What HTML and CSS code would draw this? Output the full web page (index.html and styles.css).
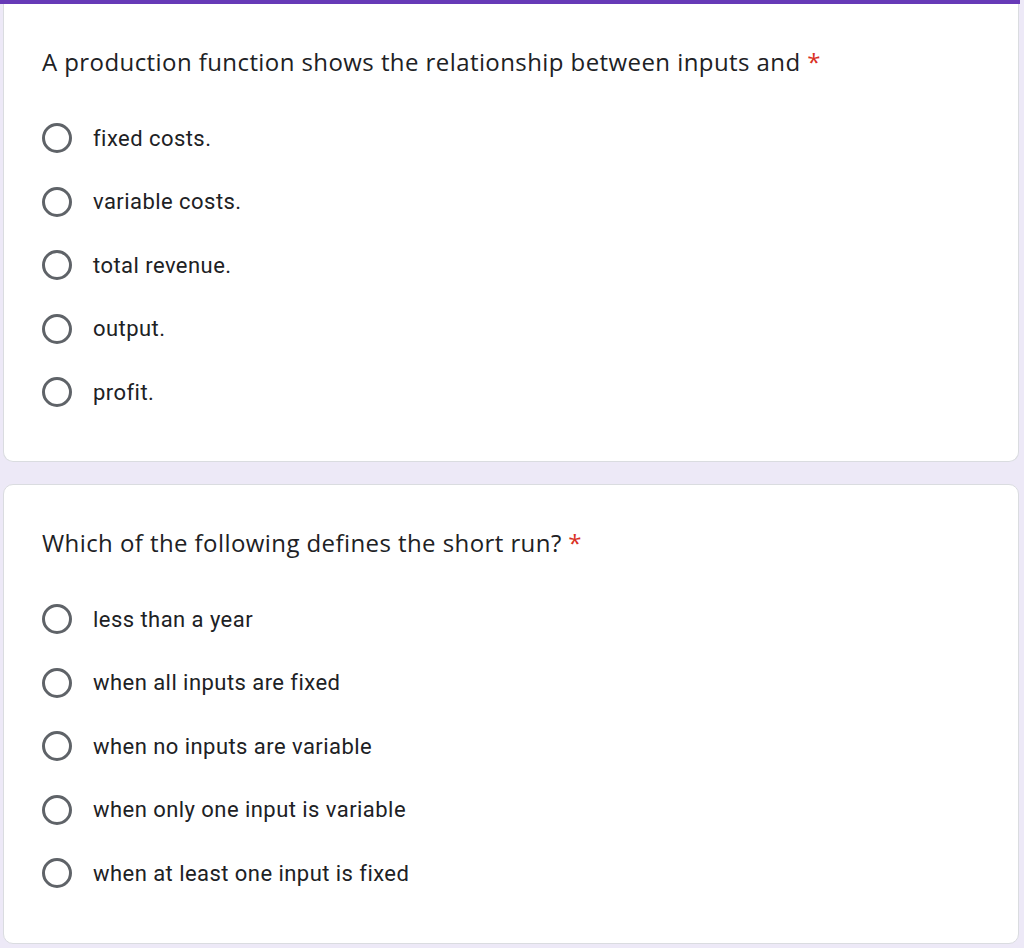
FILE: index.html
```html
<!DOCTYPE html>
<html>
<head>
<meta charset="utf-8">
<link rel="stylesheet" href="styles.css">
</head>
<body>
<div class="topbar"></div>
<div class="card card-first">
  <div class="question">A production function shows the relationship between inputs and <span class="req">*</span></div>
  <div class="options">
    <div class="option"><span class="radio"></span><span class="label">fixed costs.</span></div>
    <div class="option"><span class="radio"></span><span class="label">variable costs.</span></div>
    <div class="option"><span class="radio"></span><span class="label">total revenue.</span></div>
    <div class="option"><span class="radio"></span><span class="label">output.</span></div>
    <div class="option"><span class="radio"></span><span class="label">profit.</span></div>
  </div>
</div>
<div class="card">
  <div class="question">Which of the following defines the short run? <span class="req">*</span></div>
  <div class="options">
    <div class="option"><span class="radio"></span><span class="label">less than a year</span></div>
    <div class="option"><span class="radio"></span><span class="label">when all inputs are fixed</span></div>
    <div class="option"><span class="radio"></span><span class="label">when no inputs are variable</span></div>
    <div class="option"><span class="radio"></span><span class="label">when only one input is variable</span></div>
    <div class="option"><span class="radio"></span><span class="label">when at least one input is fixed</span></div>
  </div>
</div>
</body>
</html>
```
FILE: styles.css
```css
html, body {
  margin: 0;
  padding: 0;
}
body {
  background: #ede9f7;
  width: 1024px;
  height: 948px;
  overflow: hidden;
}
.topbar {
  width: 1020px;
  height: 4px;
  background: #673ab7;
}
.card {
  margin-left: 3px;
  width: 1016px;
  box-sizing: border-box;
  background: #fff;
  border: 1px solid #dadce0;
  border-radius: 10px;
  padding: 40px 38px 37.5px 38px;
}
.card-first {
  border-top: none;
  border-top-left-radius: 0;
  border-top-right-radius: 0;
  margin-bottom: 22px;
}
.question {
  font-family: "Open Sans", sans-serif;
  font-size: 24px;
  letter-spacing: 0.42px;
  line-height: 36px;
  height: 36px;
  color: #202124;
  white-space: nowrap;
  margin-bottom: 26.25px;
}
.req {
  color: #d93025;
  margin-left: 0;
}
.option {
  height: 63.5px;
  display: flex;
  align-items: center;
}
.radio {
  width: 30px;
  height: 30px;
  box-sizing: border-box;
  border: 3px solid #5f6368;
  border-radius: 50%;
  flex: none;
}
.label {
  margin-left: 21px;
  font-family: Roboto, sans-serif;
  font-size: 22px;
  letter-spacing: 0.45px;
  font-variant-ligatures: none;
  color: #202124;
}
```
